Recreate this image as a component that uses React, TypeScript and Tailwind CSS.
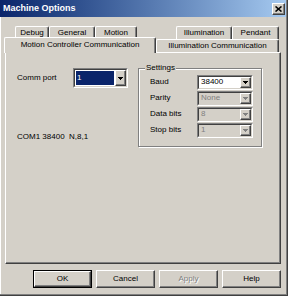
import React from "react";

function Arrow({ color = "#000" }: { color?: string }) {
  return (
    <svg width="5" height="3" viewBox="0 0 5 3" shapeRendering="crispEdges">
      <polygon points="0,0 5,0 2.5,3" fill={color} />
    </svg>
  );
}

function Combo({
  value,
  state,
  big,
}: {
  value: string;
  state: "hl" | "white" | "disabled";
  big?: boolean;
}) {
  return (
    <div
      className={`${big ? "w-[55px] h-[20px]" : "w-[56px] h-[15px]"} flex border border-t-[#808080] border-l-[#808080] border-r-white border-b-white`}
    >
      <div
        className={`flex-1 flex border border-t-[#404040] border-l-[#404040] border-r-[#d4d0c8] border-b-[#d4d0c8] ${state === "disabled" ? "bg-[#d4d0c8]" : "bg-white"}`}
      >
        <div className="flex-1 flex p-px">
          <div
            className={`flex-1 flex items-center pl-[1px] leading-none ${state === "hl" ? "bg-[#0a246a] text-white" : state === "disabled" ? "text-[#808080]" : "text-black"}`}
          >
            {value}
          </div>
        </div>
        <div className="w-[11px] flex items-center justify-center bg-[#d4d0c8] border border-t-white border-l-white border-r-[#404040] border-b-[#404040] shadow-[inset_-1px_-1px_0_#808080]">
          <Arrow color={state === "disabled" ? "#808080" : "#000"} />
        </div>
      </div>
    </div>
  );
}

function Tab({ label, w }: { label: string; w: string }) {
  return (
    <div
      className={`${w} h-full flex items-center justify-center leading-none rounded-t-[2px] border-t border-l border-r border-t-white border-l-white border-r-[#404040] shadow-[inset_-1px_0_0_#808080]`}
    >
      {label}
    </div>
  );
}

function Btn({ label, disabled, def }: { label: string; disabled?: boolean; def?: boolean }) {
  const inner = (
    <div
      className={`w-full h-full flex items-center justify-center leading-none border border-t-white border-l-white border-r-[#404040] border-b-[#404040] shadow-[inset_-1px_-1px_0_#808080] ${disabled ? "text-[#808080] [text-shadow:1px_1px_0_#ffffff]" : "text-black"}`}
    >
      {label}
    </div>
  );
  return (
    <div className={`w-[59px] h-[18px] ${def ? "border border-black" : ""}`}>{inner}</div>
  );
}

export default function App() {
  return (
    <div className="w-[288px] h-[296px] bg-[#d4d0c8] font-['Liberation_Sans',Arial,sans-serif] text-[8px] text-black overflow-hidden">
      <div className="h-full flex flex-col border-r border-b border-r-[#404040] border-b-[#404040]">
        <div className="flex-1 flex flex-col border-r border-b border-r-[#808080] border-b-[#808080]">
          {/* Title bar */}
          <div className="h-[17px] flex items-center justify-between pl-[3px] pr-[1px] bg-gradient-to-r from-[#0a246a] to-[#a6caf0]">
            <span className="text-white font-bold text-[9px] leading-none">Machine Options</span>
            <div className="w-[13px] h-[12px] flex items-center justify-center bg-[#d4d0c8] border border-t-white border-l-white border-r-[#404040] border-b-[#404040] shadow-[inset_-1px_-1px_0_#808080]">
              <svg width="7" height="6" viewBox="0 0 7 6">
                <path d="M0.5 0.5L6.5 5.5M6.5 0.5L0.5 5.5" stroke="#000" strokeWidth="1.6" />
              </svg>
            </div>
          </div>

          <div className="flex-1 flex flex-col border-l border-l-white">
            {/* Tab row 1 */}
            <div className="mt-[9px] h-[13px] flex pl-[14px]">
              <Tab label="Debug" w="w-[34px]" />
              <Tab label="General" w="w-[46px]" />
              <Tab label="Motion" w="w-[42px]" />
              <div className="w-[39px]" />
              <Tab label="Illumination" w="w-[56px]" />
              <Tab label="Pendant" w="w-[47px]" />
            </div>
            {/* Tab row 2 */}
            <div className="h-[13px] flex items-end pl-[3px]">
              <div className="relative z-10 w-[152px] h-[16px] -mb-px bg-[#d4d0c8] flex items-center justify-center pb-[2px] leading-none rounded-t-[2px] border-t border-l border-r border-t-white border-l-white border-r-[#404040] shadow-[inset_-1px_0_0_#808080]">
                Motion Controller Communication
              </div>
              <Tab label="Illumination Communication" w="w-[123px]" />
            </div>
            {/* Panel */}
            <div className="ml-[4px] w-[276px] h-[212px] flex border border-t-white border-l-white border-r-[#404040] border-b-[#404040] shadow-[inset_-1px_-1px_0_#808080]">
              <div className="pl-[11px] pt-[15px] flex flex-col">
                <div className="flex items-center">
                  <span className="w-[56px] leading-none">Comm port</span>
                  <Combo value="1" state="hl" big />
                </div>
                <div className="mt-[44px] leading-[10px] whitespace-pre">COM1 38400  N,8,1</div>
              </div>
              <div className="ml-[10px] mt-[15px] w-[124px] h-[79px] relative border border-[#808080] shadow-[inset_1px_1px_0_#ffffff,1px_1px_0_#ffffff] pt-[5px] pl-[11px] flex flex-col">
                <span className="absolute left-[6px] top-[-5px] px-[1px] bg-[#d4d0c8] leading-[8px]">Settings</span>
                {[
                  ["Baud", "38400", "white"],
                  ["Parity", "None", "disabled"],
                  ["Data bits", "8", "disabled"],
                  ["Stop bits", "1", "disabled"],
                ].map(([l, v, s]) => (
                  <div key={l} className="h-[16px] flex items-center">
                    <span className="w-[47px] leading-none">{l}</span>
                    <Combo value={v} state={s as "white" | "disabled"} />
                  </div>
                ))}
              </div>
            </div>
            {/* Buttons */}
            <div className="mt-[6px] flex justify-end gap-[4px] pr-[5px]">
              <Btn label="OK" def />
              <Btn label="Cancel" />
              <Btn label="Apply" disabled />
              <Btn label="Help" />
            </div>
          </div>
        </div>
      </div>
    </div>
  );
}
